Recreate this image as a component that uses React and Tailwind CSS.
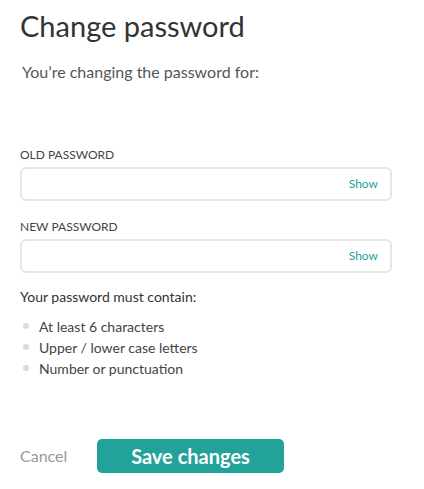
export default function App() {
  const font = { fontFamily: 'Lato, "Open Sans", sans-serif' };
  return (
    <div className="w-[424px] h-[489px] bg-white text-[#333] pl-[20px] pr-[32px] pt-[8px]" style={font}>
      <h1 className="text-[29px] leading-[36px] text-[#333] font-normal">Change password</h1>
      <p className="mt-[18px] ml-[2px] text-[16px] leading-[20px] text-[#555]">You’re changing the password for:</p>

      <div className="mt-[66px]">
        <label className="block text-[12px] leading-[14px] text-[#444] uppercase">Old password</label>
        <div className="mt-[5px] h-[34px] rounded-[6px] border-2 border-[#e6e6e6] flex items-center justify-end pr-[12px]">
          <span className="text-[12px] text-[#26a39b]">Show</span>
        </div>
      </div>

      <div className="mt-[19px]">
        <label className="block text-[12px] leading-[14px] text-[#444] uppercase">New password</label>
        <div className="mt-[5px] h-[34px] rounded-[6px] border-2 border-[#e6e6e6] flex items-center justify-end pr-[12px]">
          <span className="text-[12px] text-[#26a39b]">Show</span>
        </div>
      </div>

      <p className="mt-[15px] text-[14px] leading-[18px] text-[#333]">Your password must contain:</p>
      <ul className="mt-[11px] flex flex-col gap-[3px]">
        {["At least 6 characters", "Upper / lower case letters", "Number or punctuation"].map((t) => (
          <li key={t} className="flex items-center h-[18px] text-[14px] text-[#444]">
            <span className="ml-[3px] w-[6px] h-[6px] rounded-full bg-[#dcdcdc]" />
            <span className="ml-[10px]">{t}</span>
          </li>
        ))}
      </ul>

      <div className="mt-[62px] flex items-center">
        <span className="text-[16px] text-[#999] w-[77px]">Cancel</span>
        <button className="w-[187px] h-[34px] rounded-[5px] bg-[#22a39a] text-white font-bold text-[20px]">Save changes</button>
      </div>
    </div>
  );
}
